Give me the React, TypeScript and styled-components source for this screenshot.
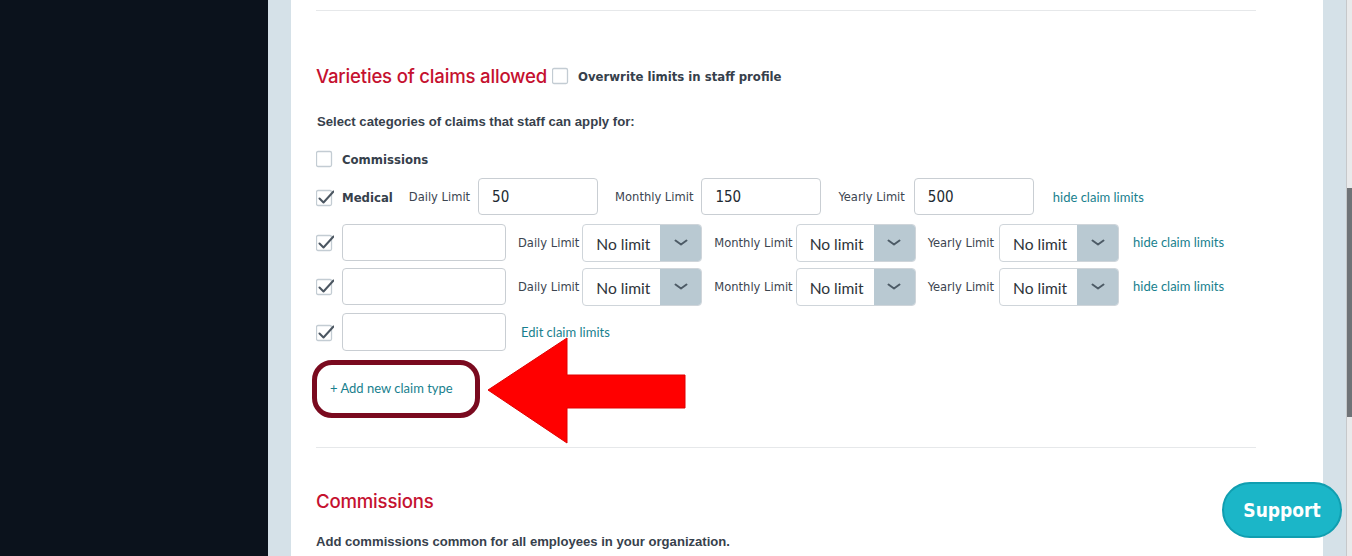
import React from "react";
import styled, { createGlobalStyle } from "styled-components";

const GlobalStyle = createGlobalStyle`
  html, body { margin: 0; padding: 0; overflow: hidden; }
  body { font-family: "Liberation Sans", Arial, sans-serif; background: #ffffff; }
  * { box-sizing: border-box; }
`;

const Page = styled.div`
  display: flex;
  width: 1352px;
  height: 556px;
  overflow: hidden;
`;

const Sidebar = styled.aside`
  width: 268px;
  flex: none;
  background: #0b121c;
`;

const Main = styled.main`
  flex: 1;
  display: flex;
  background: #d5e1e8;
  padding: 0 23px;
`;

const Panel = styled.section`
  flex: 1;
  background: #ffffff;
  padding: 10px 67px 0 25px;
`;

const ScrollTrack = styled.div`
  width: 6px;
  flex: none;
  background: #e9eaeb;
  border-left: 1px solid #c6c8ca;
`;

const ScrollThumb = styled.div`
  margin-top: 188px;
  height: 229px;
  background: #6f7377;
`;

const Divider = styled.hr<{ $gap?: number }>`
  margin: ${(p) => p.$gap ?? 0}px 0 0 0;
  border: 0;
  height: 1px;
  background: #e6e8ea;
`;

const TitleRow = styled.div`
  display: flex;
  align-items: center;
  height: 24px;
  margin-top: 53px;
`;

const Heading = styled.h2<{ $gap?: number }>`
  margin: ${(p) => p.$gap ?? 0}px 0 0 0;
  font-family: "Inter", "Lato", sans-serif;
  font-weight: 500;
  font-size: 18.6px;
  line-height: 24px;
  letter-spacing: -0.2px;
  color: #c5112f;
`;

const BoldNote = styled.span`
  font-family: "DejaVu Sans Condensed", "DejaVu Sans", sans-serif;
  font-weight: 700;
  font-size: 13px;
  color: #36404b;
  margin-left: 8px;
`;

const Prompt = styled.p<{ $gap: number }>`
  margin: ${(p) => p.$gap}px 0 0 1px;
  font-family: "Liberation Sans", Arial, sans-serif;
  font-weight: 700;
  font-size: 13.15px;
  line-height: 16px;
  color: #37414c;
`;

const Row = styled.div<{ $gap: number; $h: number }>`
  display: flex;
  align-items: center;
  margin-top: ${(p) => p.$gap}px;
  height: ${(p) => p.$h}px;
`;

const BoxWrap = styled.span<{ $inline?: boolean }>`
  display: inline-flex;
  flex: none;
  width: 18px;
  height: 18px;
  margin-left: ${(p) => (p.$inline ? "5px" : "0")};
  margin-top: ${(p) => (p.$inline ? "0" : "2px")};
`;

const CategoryName = styled.span<{ $gap?: number }>`
  font-family: "DejaVu Sans Condensed", "DejaVu Sans", sans-serif;
  font-weight: 700;
  font-size: 13px;
  color: #36404b;
  margin-left: ${(p) => p.$gap ?? 8}px;
  margin-top: 2px;
`;

const LimitLabel = styled.span<{ $before: number; $after: number }>`
  font-family: "DejaVu Sans Condensed", "DejaVu Sans", sans-serif;
  font-size: 12.8px;
  color: #3c4550;
  margin-left: ${(p) => p.$before}px;
  margin-right: ${(p) => p.$after}px;
  white-space: nowrap;
`;

const TextField = styled.input<{ $w: number; $h?: number; $gap?: number }>`
  width: ${(p) => p.$w}px;
  height: ${(p) => p.$h ?? 37}px;
  margin-left: ${(p) => p.$gap ?? 0}px;
  border: 1px solid #c9ced3;
  border-radius: 4px;
  padding: 0 13px;
  font-family: "DejaVu Sans Condensed", "DejaVu Sans", sans-serif;
  font-size: 15px;
  color: #222a31;
  background: #ffffff;
  outline: none;
`;

const SelectBox = styled.div`
  display: flex;
  width: 120px;
  height: 38px;
  margin-top: 2px;
  border: 1px solid #cfd5da;
  border-radius: 4px;
  overflow: hidden;
  background: #ffffff;
`;

const SelectValue = styled.span`
  flex: 1;
  display: flex;
  align-items: center;
  padding-left: 13px;
  padding-top: 2px;
  font-family: "Lato", sans-serif;
  font-size: 15.6px;
  color: #2e343a;
`;

const SelectCaret = styled.span`
  width: 41px;
  display: flex;
  align-items: center;
  justify-content: center;
  background: #b9c9d2;
`;

const LinkText = styled.a<{ $gap?: number }>`
  font-family: "Lato", sans-serif;
  font-size: 13px;
  color: #187f8e;
  text-decoration: none;
  margin-left: ${(p) => p.$gap ?? 0}px;
  white-space: nowrap;
  cursor: pointer;
`;

const AddRow = styled.div`
  position: relative;
  margin-top: 9px;
  margin-left: -4px;
  height: 58px;
  display: flex;
`;

const Highlight = styled.div`
  width: 168px;
  height: 58px;
  border: 5px solid #7a0a1f;
  border-radius: 20px;
  display: flex;
  align-items: center;
  padding-left: 13px;
  padding-bottom: 2px;
`;

const Arrow = styled.svg`
  position: absolute;
  left: 174px;
  top: -24px;
`;

const Description = styled.p`
  margin: 21px 0 0 0;
  font-family: "Liberation Sans", Arial, sans-serif;
  font-weight: 700;
  font-size: 13.1px;
  line-height: 16px;
  color: #37414c;
`;

const SupportButton = styled.button`
  position: absolute;
  left: 1222px;
  top: 482px;
  width: 120px;
  height: 56px;
  border-radius: 28px;
  border: 2px solid #109eb0;
  background: #1bb6c8;
  color: #ffffff;
  font-family: "DejaVu Sans Condensed", "DejaVu Sans", sans-serif;
  font-weight: 700;
  font-size: 19px;
  cursor: pointer;
`;

const Checkbox: React.FC<{ checked?: boolean; inline?: boolean }> = ({ checked, inline }) => (
  <BoxWrap $inline={inline}>
    <svg width="18" height="18" viewBox="0 0 18 18">
      <rect x="0.5" y="1.5" width="15" height="15" rx="1.5" fill="#fff" stroke="#c3ccd3" strokeWidth="1.3" />
      {checked && (
        <path d="M3.5 9.5 L7.5 13.5 L17.5 2.5" fill="none" stroke="#4b5661" strokeWidth="2" strokeLinecap="round" strokeLinejoin="round" />
      )}
    </svg>
  </BoxWrap>
);

const Chevron = () => (
  <svg width="14" height="8" viewBox="0 0 14 8">
    <path d="M1.5 1.5 L7 5.5 L12.5 1.5" fill="none" stroke="#4d5b66" strokeWidth="2" strokeLinecap="round" strokeLinejoin="round" />
  </svg>
);

const LimitSelect: React.FC = () => (
  <SelectBox>
    <SelectValue>No limit</SelectValue>
    <SelectCaret>
      <Chevron />
    </SelectCaret>
  </SelectBox>
);

const CustomLimitRow: React.FC<{ gap: number }> = ({ gap }) => (
  <Row $gap={gap} $h={40}>
    <Checkbox checked />
    <TextField $w={164} $gap={8} readOnly value="" />
    <LimitLabel $before={12} $after={3}>Daily Limit</LimitLabel>
    <LimitSelect />
    <LimitLabel $before={12} $after={3}>Monthly Limit</LimitLabel>
    <LimitSelect />
    <LimitLabel $before={12} $after={5}>Yearly Limit</LimitLabel>
    <LimitSelect />
    <LinkText $gap={14}>hide claim limits</LinkText>
  </Row>
);

export default function App() {
  return (
    <>
      <GlobalStyle />
      <Page>
        <Sidebar />
        <Main>
          <Panel>
            <Divider />
            <TitleRow>
              <Heading>Varieties of claims allowed</Heading>
              <Checkbox inline />
              <BoldNote>Overwrite limits in staff profile</BoldNote>
            </TitleRow>
            <Prompt $gap={26}>Select categories of claims that staff can apply for:</Prompt>

            <Row $gap={20} $h={16}>
              <Checkbox />
              <CategoryName>Commissions</CategoryName>
            </Row>

            <Row $gap={12} $h={37}>
              <Checkbox checked />
              <CategoryName>Medical</CategoryName>
              <LimitLabel $before={16} $after={8}>Daily Limit</LimitLabel>
              <TextField $w={120} readOnly value="50" />
              <LimitLabel $before={17} $after={8}>Monthly Limit</LimitLabel>
              <TextField $w={120} readOnly value="150" />
              <LimitLabel $before={17} $after={9}>Yearly Limit</LimitLabel>
              <TextField $w={120} readOnly value="500" />
              <LinkText $gap={19}>hide claim limits</LinkText>
            </Row>

            <CustomLimitRow gap={7} />
            <CustomLimitRow gap={4} />

            <Row $gap={7} $h={38}>
              <Checkbox checked />
              <TextField $w={164} $h={38} $gap={8} readOnly value="" />
              <LinkText $gap={15}>Edit claim limits</LinkText>
            </Row>

            <AddRow>
              <Highlight>
                <LinkText>+ Add new claim type</LinkText>
              </Highlight>
              <Arrow width="201" height="109" viewBox="0 0 201 109">
                <polygon
                  points="2,54 81,2 81,39 199,39 199,72 81,72 81,107"
                  fill="#ff0000"
                  stroke="#e00000"
                  strokeWidth="1"
                  strokeLinejoin="miter"
                />
              </Arrow>
            </AddRow>

            <Divider $gap={29} />
            <Heading $gap={41}>Commissions</Heading>
            <Description>Add commissions common for all employees in your organization.</Description>
          </Panel>
        </Main>
        <ScrollTrack>
          <ScrollThumb />
        </ScrollTrack>
        <SupportButton>Support</SupportButton>
      </Page>
    </>
  );
}
